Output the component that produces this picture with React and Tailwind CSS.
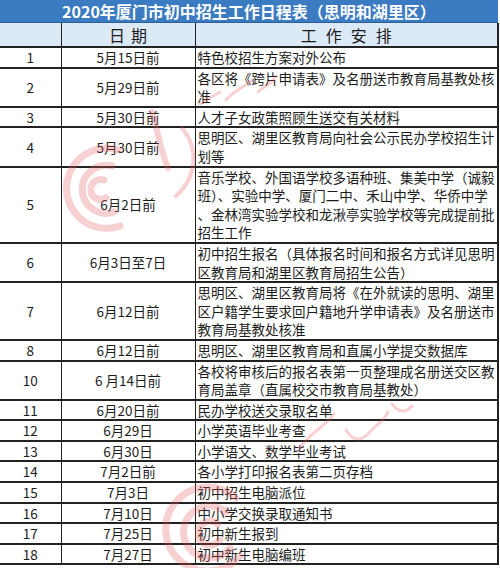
import React from 'react';

const rows = [
  ['1', '5月15日前', ['特色校招生方案对外公布']],
  ['2', '5月29日前', ['各区将《跨片申请表》及名册送市教育局基教处核', '准']],
  ['3', '5月30日前', ['人才子女政策照顾生送交有关材料']],
  ['4', '5月30日前', ['思明区、湖里区教育局向社会公示民办学校招生计', '划等']],
  ['5', '6月2日前', [
    '音乐学校、外国语学校多语种班、集美中学（诚毅',
    '班）、实验中学、厦门二中、禾山中学、华侨中学',
    '、金林湾实验学校和龙湫亭实验学校等完成提前批',
    '招生工作',
  ]],
  ['6', '6月3日至7日', ['初中招生报名（具体报名时间和报名方式详见思明', '区教育局和湖里区教育局招生公告）']],
  ['7', '6月12日前', [
    '思明区、湖里区教育局将《在外就读的思明、湖里',
    '区户籍学生要求回户籍地升学申请表》及名册送市',
    '教育局基教处核准',
  ]],
  ['8', '6月12日前', ['思明区、湖里区教育局和直属小学提交数据库']],
  ['10', '6 月14日前', ['各校将审核后的报名表第一页整理成名册送交区教', '育局盖章（直属校交市教育局基教处）']],
  ['11', '6月20日前', ['民办学校送交录取名单']],
  ['12', '6月29日', ['小学英语毕业考查']],
  ['13', '6月30日', ['小学语文、数学毕业考试']],
  ['14', '7月2日前', ['各小学打印报名表第二页存档']],
  ['15', '7月3日', ['初中招生电脑派位']],
  ['16', '7月10日', ['中小学交换录取通知书']],
  ['17', '7月25日', ['初中新生报到']],
  ['18', '7月27日', ['初中新生电脑编班']],
];

// faint newspaper watermark behind the table
function Watermark() {
  return (
    <svg className="absolute inset-0 pointer-events-none" width="500" height="568" viewBox="0 0 500 568" fill="none" stroke="#e4585d" strokeLinecap="round" opacity="0.28">
      <g strokeWidth="7">
        <path d="M118 150 A40 40 0 1 0 120 226" />
        <path d="M112 166 A24 24 0 1 0 114 212" />
        <path d="M104 180 A10 10 0 1 0 106 198" />
      </g>
      <path d="M152 112 C158 130 160 150 168 168" strokeWidth="6" />
      <path d="M182 128 C200 150 196 178 176 196" strokeWidth="4" />
      <path d="M200 104 l20 -12 M226 100 c8 -10 18 -12 26 -20 M258 92 c6 -6 14 -8 18 -16" strokeWidth="3" />
      <g strokeWidth="7">
        <path d="M236 498 A42 42 0 1 0 240 556" />
        <path d="M226 512 A26 26 0 1 0 230 548" />
        <path d="M218 524 A12 12 0 1 0 220 540" />
      </g>
      <path d="M300 448 c10 -16 24 -20 34 -34 M346 430 c6 10 14 12 22 4 c6 -8 16 -12 20 -22 M392 404 c6 8 14 10 20 2" strokeWidth="3" />
    </svg>
  );
}

export default function App() {
  const font = { fontFamily: '"Noto Sans CJK SC", "Liberation Sans", sans-serif' };
  return (
    <div className="relative w-[500px] h-[568px] overflow-hidden bg-white text-[#1c1c1c]" style={font}>
      <div className="w-[498px] h-[23px] bg-[#3b7bc1] border-b border-[#2c5f96] flex items-center justify-center text-white font-bold text-[16px] leading-none">
        2020年厦门市初中招生工作日程表（思明和湖里区）
      </div>
      <table className="w-[498px] border-collapse table-fixed">
        <colgroup>
          <col className="w-[61px]" />
          <col className="w-[134px]" />
          <col className="w-[303px]" />
        </colgroup>
        <thead>
          <tr className="h-[24px] bg-[#dce9f6] text-[16px] leading-[22px]">
            <th className="font-normal border-b-2 border-r border-[#222] p-0"></th>
            <th className="font-normal border-b-2 border-r border-[#222] p-0">
              <span className="flex justify-center gap-[6px]"><span>日</span><span>期</span></span>
            </th>
            <th className="font-normal border-b-2 border-r-2 border-[#222] p-0">
              <span className="flex justify-center gap-[9px]"><span>工</span><span>作</span><span>安</span><span>排</span></span>
            </th>
          </tr>
        </thead>
        <tbody className="text-[13.5px] leading-[18.6px]">
          {rows.map(([no, date, lines]) => (
            <tr key={no}>
              <td className="border-b-2 border-r border-[#222] p-0 text-center">{no}</td>
              <td className="border-b-2 border-r border-[#222] p-0 text-center">{date}</td>
              <td className="border-b-2 border-r-2 border-[#222] p-0 pl-[2px] whitespace-nowrap">
                {lines.map((l, i) => (
                  <div key={i}>{l}</div>
                ))}
              </td>
            </tr>
          ))}
        </tbody>
      </table>
      <Watermark />
    </div>
  );
}
